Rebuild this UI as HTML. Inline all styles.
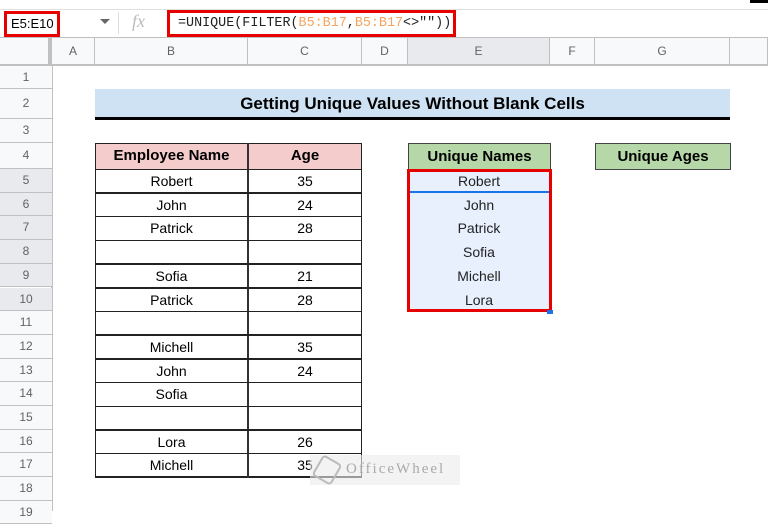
<!DOCTYPE html>
<html><head><style>
*{margin:0;padding:0;box-sizing:border-box}
body{width:768px;height:511px;overflow:hidden;background:#fff;font-family:"Liberation Sans",Arial,sans-serif;position:relative}
.a{position:absolute}
.ch{position:absolute;top:38px;height:27px;border-right:1px solid #c0c0c0;background:#f8f9fa;color:#5f6368;font-size:12px;text-align:center;line-height:27px}
.rh{position:absolute;left:0;width:52px;border-bottom:1px solid #c0c0c0;background:#f8f9fa;color:#5f6368;font-size:12px;text-align:center}
.c{position:absolute;font-size:14px;color:#000;text-align:center;line-height:16px}
</style></head><body>
<div class="a" style="left:0;top:0;width:768px;height:10px;border-bottom:1px solid #e0e0e0"></div>
<div class="a" style="left:750px;top:0;width:18px;height:3px;background:#000"></div>
<div class="a" style="left:0;top:10px;width:768px;height:28px;border-bottom:1px solid #c0c0c0"></div>
<div class="a" style="left:4px;top:11px;width:56px;height:26px;border:3px solid #e60000;font-size:13px;line-height:20px;padding-left:4px">E5:E10</div>
<div class="a" style="left:100px;top:19px;width:0;height:0;border-left:5px solid transparent;border-right:5px solid transparent;border-top:5px solid #666"></div>
<div class="a" style="left:118px;top:12px;width:1px;height:22px;background:#ddd"></div>
<div class="a" style="left:132px;top:11px;font-family:'Liberation Serif',serif;font-style:italic;font-size:18px;color:#bbb">fx</div>
<div class="a" style="left:167px;top:10px;width:289px;height:27px;border:3px solid #e60000;font-family:'Liberation Mono',monospace;font-size:13.4px;line-height:21px;padding-left:8px;color:#222;white-space:nowrap">=UNIQUE(FILTER(<span style="color:#f4a460">B5:B17</span>,<span style="color:#f4a460">B5:B17</span>&lt;&gt;""))</div>
<!-- column headers -->
<div class="ch" style="left:0;width:52px;background:#f8f9fa;border-right:4px solid #c0c0c0"></div>
<div class="ch" style="left:52px;width:43px">A</div>
<div class="ch" style="left:95px;width:153px">B</div>
<div class="ch" style="left:248px;width:114px">C</div>
<div class="ch" style="left:362px;width:46px">D</div>
<div class="ch" style="left:408px;width:142px;background:#e8eaed">E</div>
<div class="ch" style="left:550px;width:45px">F</div>
<div class="ch" style="left:595px;width:135px">G</div>
<div class="ch" style="left:730px;width:38px"></div>
<div class="a" style="left:0;top:64px;width:768px;height:2px;background:#c0c0c0"></div>
<div class="a" style="left:51px;top:66px;width:2px;height:445px;background:#c0c0c0"></div>
<!-- row headers -->
<div class="rh" style="top:66px;height:23px;line-height:22px">1</div>
<div class="rh" style="top:89px;height:30px;line-height:29px">2</div>
<div class="rh" style="top:119px;height:24px;line-height:23px">3</div>
<div class="rh" style="top:143px;height:26px;line-height:25px">4</div>
<div class="rh" style="top:169px;height:23.7px;line-height:23px;background:#e8eaed">5</div>
<div class="rh" style="top:192.7px;height:23.7px;line-height:23px;background:#e8eaed">6</div>
<div class="rh" style="top:216.4px;height:23.7px;line-height:23px;background:#e8eaed">7</div>
<div class="rh" style="top:240.1px;height:23.7px;line-height:23px;background:#e8eaed">8</div>
<div class="rh" style="top:263.8px;height:23.7px;line-height:23px;background:#e8eaed">9</div>
<div class="rh" style="top:287.5px;height:23.7px;line-height:23px;background:#e8eaed">10</div>
<div class="rh" style="top:311.2px;height:23.7px;line-height:23px">11</div>
<div class="rh" style="top:334.9px;height:23.7px;line-height:23px">12</div>
<div class="rh" style="top:358.6px;height:23.7px;line-height:23px">13</div>
<div class="rh" style="top:382.3px;height:23.7px;line-height:23px">14</div>
<div class="rh" style="top:406px;height:23.7px;line-height:23px">15</div>
<div class="rh" style="top:429.7px;height:23.7px;line-height:23px">16</div>
<div class="rh" style="top:453.4px;height:23.7px;line-height:23px">17</div>
<div class="rh" style="top:477.1px;height:23.7px;line-height:23px">18</div>
<div class="rh" style="top:500.8px;height:23.7px;line-height:23px">19</div>
<!-- title -->
<div class="a" style="left:95px;top:89px;width:635px;height:31px;background:#cfe2f3;border-bottom:3px solid #000;font-weight:bold;font-size:17px;text-align:center;line-height:29px">Getting Unique Values Without Blank Cells</div>
<!-- table -->
<div class="a" style="left:95px;top:143px;width:267px;height:335px;border:1px solid #222;border-bottom-width:2px"></div>
<div class="a" style="left:96px;top:144px;width:152px;height:25px;background:#f4cccc"></div>
<div class="a" style="left:249px;top:144px;width:112px;height:25px;background:#f4cccc"></div>
<div class="a" style="left:247px;top:143px;width:2px;height:335px;background:#333"></div>
<div class="c" style="left:95px;top:148px;width:153px;font-weight:bold;font-size:15px">Employee Name</div>
<div class="c" style="left:248px;top:148px;width:114px;font-weight:bold;font-size:15px">Age</div>
<div id="t"></div>
<!-- unique -->
<div class="a" style="left:408px;top:143px;width:143px;height:27px;background:#b6d7a8;border:1px solid #444;font-weight:bold;font-size:15px;text-align:center;line-height:25px">Unique Names</div>
<div class="a" style="left:595px;top:143px;width:136px;height:27px;background:#b6d7a8;border:1px solid #444;font-weight:bold;font-size:15px;text-align:center;line-height:25px">Unique Ages</div>
<div class="a" style="left:407px;top:169px;width:145px;height:143px;background:#e8f0fe;border:3px solid #e60000"></div>
<div class="a" style="left:410px;top:191px;width:139px;height:2px;background:#1a73e8"></div>
<div class="a" style="left:547px;top:310px;width:6px;height:4px;background:#1a73e8"></div>
<div class="c" style="left:408px;top:173px;width:142px;color:#222">Robert</div>
<div class="c" style="left:408px;top:197px;width:142px;color:#222">John</div>
<div class="c" style="left:408px;top:220px;width:142px;color:#222">Patrick</div>
<div class="c" style="left:408px;top:244px;width:142px;color:#222">Sofia</div>
<div class="c" style="left:408px;top:268px;width:142px;color:#222">Michell</div>
<div class="c" style="left:408px;top:292px;width:142px;color:#222">Lora</div>
<!-- watermark -->
<div class="a" style="left:310px;top:455px;width:150px;height:30px;background:rgba(235,235,235,0.6)"></div>
<div class="a" style="left:316px;top:458px;width:22px;height:24px;border:2px solid #bbb;border-radius:4px;transform:rotate(30deg)"></div>
<div class="a" style="left:346px;top:461px;font-family:'Liberation Serif',serif;font-size:15px;letter-spacing:2px;color:#aaa">OfficeWheel</div>
<script>
var n=["Robert","John","Patrick","","Sofia","Patrick","","Michell","John","Sofia","","Lora","Michell"],a=["35","24","28","","21","28","","35","24","","","26","35"],h="";
for(var i=0;i<13;i++){var y=169+i*23.7;h+='<div class="a" style="left:95px;top:'+(y-0.5)+'px;width:267px;height:1.5px;background:#222"></div>';
h+='<div class="c" style="left:95px;top:'+(y+4)+'px;width:153px">'+n[i]+'</div><div class="c" style="left:248px;top:'+(y+4)+'px;width:114px">'+a[i]+'</div>';}
document.getElementById("t").innerHTML=h;
</script>
</body></html>
